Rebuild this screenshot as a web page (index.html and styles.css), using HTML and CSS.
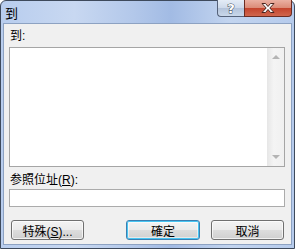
FILE: index.html
```html
<!DOCTYPE html>
<html lang="zh-Hant">

<head>
    <meta charset="UTF-8">
    <title>到</title>
    <link rel="stylesheet" href="styles.css">
</head>

<body>
    <div class="window">
        <div class="titlebar">
            <span class="title">到</span>
            <div class="caption-btns">
                <button class="cap help"><span class="q">?</span></button>
                <button class="cap close">
                    <svg width="16" height="12" viewBox="0 0 16 12">
                        <path d="M2 1.5h3.5L8 4.5l2.5-3H14L9.8 6 14 10.5h-3.5L8 7.5l-2.5 3H2L6.2 6z" fill="#fff" stroke="#4a2620" stroke-width="1" stroke-linejoin="round"/>
                    </svg>
                </button>
            </div>
        </div>
        <div class="client">
            <div class="lbl">到:</div>
            <div class="listbox">
                <div class="list-area"></div>
                <div class="vscroll">
                    <span class="arrow up"></span>
                    <span class="arrow down"></span>
                </div>
            </div>
            <div class="lbl lbl-ref">参照位址(<u>R</u>):</div>
            <input class="textbox" type="text">
            <div class="btnrow">
                <button class="btn special">特殊(<u>S</u>)...</button>
                <button class="btn default">確定</button>
                <button class="btn">取消</button>
            </div>
        </div>
    </div>
</body>

</html>
```

FILE: styles.css
```css
body {
    margin: 0;
    padding: 0;
    font-family: "Liberation Sans", "Noto Sans CJK TC", sans-serif;
    font-size: 12px;
}

.window {
    width: 295px;
    height: 249px;
    box-sizing: border-box;
    border: 1px solid #3e4a5c;
    border-radius: 6px 6px 0 0;
    padding: 0 2px 3px;
    background: linear-gradient(to right, #b8cdee 0%, #c8d8f1 25%, #b3c8ea 45%, #a2bbe4 58%, #c2d4ef 78%, #b6cbec 100%);
    display: flex;
    flex-direction: column;
}

.titlebar {
    height: 22px;
    display: flex;
    align-items: flex-start;
}

.title {
    padding: 5px 0 0 2px;
    font-size: 13px;
    line-height: 16px;
    color: #000;
}

.caption-btns {
    margin-left: auto;
    margin-top: -1px;
    display: flex;
}

.cap {
    height: 17px;
    padding: 0;
    border: 1px solid #55627a;
    border-top: none;
    display: flex;
    align-items: center;
    justify-content: center;
}

.help {
    width: 27px;
    border-right: none;
    border-radius: 0 0 0 4px;
    background: linear-gradient(#e4ecf6 0%, #cdd9ea 50%, #b3c3da 51%, #c9d7ea 100%);
}

.help .q {
    font-family: "DejaVu Sans", sans-serif;
    font-weight: bold;
    font-size: 13px;
    line-height: 13px;
    color: #fff;
    -webkit-text-stroke: 1px #3b4658;
    paint-order: stroke fill;
}

.close {
    width: 48px;
    border-radius: 0 0 4px 0;
    background: linear-gradient(#eab0a2 0%, #db8a76 50%, #c4432c 51%, #d0664d 100%);
    border-color: #6b2c22;
}

.client {
    flex: 1;
    border: 1px solid #8da2c2;
    background: #f0f0f0;
    display: flex;
    flex-direction: column;
    padding-bottom: 4px;
}

.lbl {
    margin: 4px 0 0 6px;
    line-height: 16px;
    color: #000;
}

.lbl-ref {
    margin-top: 5px;
}

.listbox {
    margin: 3px 6px 0 5px;
    height: 120px;
    box-sizing: border-box;
    border: 1px solid #a5a5a5;
    background: #fff;
    display: flex;
}

.list-area {
    flex: 1;
}

.vscroll {
    width: 17px;
    background: linear-gradient(to right, #e6e6e6, #f4f4f4 40%, #f0f0f0);
    position: relative;
}

.arrow {
    position: absolute;
    left: 5px;
    width: 0;
    height: 0;
    border-left: 4px solid transparent;
    border-right: 4px solid transparent;
}

.arrow.up {
    top: 7px;
    border-bottom: 4px solid #b4b4b4;
}

.arrow.down {
    bottom: 7px;
    border-top: 4px solid #b4b4b4;
}

.textbox {
    margin: 1px 6px 0 5px;
    height: 18px;
    box-sizing: border-box;
    border: 1px solid #ababab;
    background: #fff;
    padding: 0;
    outline: none;
}

.btnrow {
    margin-top: auto;
    padding: 0 7px;
    display: flex;
    gap: 11px;
}

.btn {
    width: 73px;
    height: 20px;
    box-sizing: border-box;
    padding: 0;
    border: 1px solid #707070;
    border-radius: 3px;
    background: linear-gradient(#f3f3f3 0%, #ebebeb 48%, #dddddd 52%, #cfcfcf 100%);
    font-family: "Liberation Sans", "Noto Sans CJK TC", sans-serif;
    font-size: 12px;
    color: #000;
    box-shadow: inset 0 0 0 1px rgba(255, 255, 255, 0.7);
}

.special {
    margin-right: auto;
}

.default {
    width: 74px;
    border-color: #3c7fb1;
    box-shadow: inset 0 0 0 1px #48c5f2, inset 0 0 0 2px rgba(255, 255, 255, 0.5);
}
```
